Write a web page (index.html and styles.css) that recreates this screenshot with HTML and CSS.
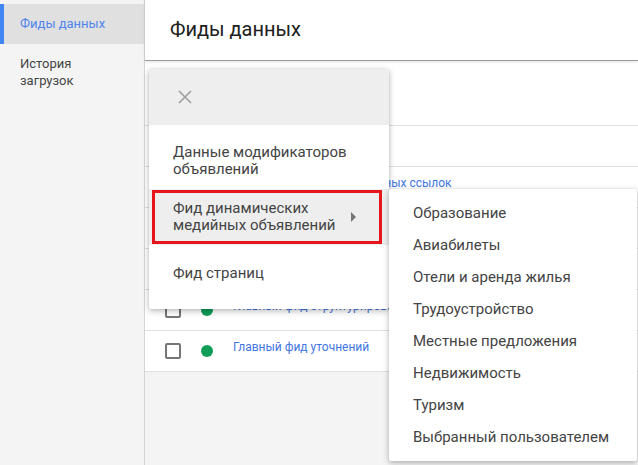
FILE: index.html
```html
<!DOCTYPE html>
<html lang="ru">
<head>
<meta charset="utf-8">
<link rel="stylesheet" href="styles.css">
</head>
<body>
<div class="app">
  <nav class="sidebar">
    <div class="nav-item active">Фиды данных</div>
    <div class="nav-item">История<br>загрузок</div>
  </nav>
  <main class="main">
    <header class="header"><h1>Фиды данных</h1></header>
    <section class="table">
      <div class="toolbar"></div>
      <div class="thead"></div>
      <div class="row"><span class="cb"></span><span class="dot"></span><a class="link">Главный фид дополнительных ссылок</a></div>
      <div class="row"><span class="cb"></span><span class="dot"></span></div>
      <div class="row"><span class="cb"></span><span class="dot"></span></div>
      <div class="row"><span class="cb"></span><span class="dot"></span><a class="link clip">Главный фид структурированных описаний</a></div>
      <div class="row"><span class="cb"></span><span class="dot"></span><a class="link">Главный фид уточнений</a></div>
    </section>
  </main>
</div>

<div class="menu">
  <div class="menu-head">
    <svg class="close" width="14" height="14" viewBox="0 0 14 14"><path d="M1 1L13 13M13 1L1 13" stroke="#9e9e9e" stroke-width="1.6" fill="none"/></svg>
  </div>
  <ul class="menu-list">
    <li class="menu-item">Данные модификаторов<br>объявлений</li>
    <li class="menu-item hover">Фид динамических<br>медийных объявлений<span class="arrow"></span></li>
    <li class="menu-item">Фид страниц</li>
  </ul>
</div>

<ul class="submenu">
  <li>Образование</li>
  <li>Авиабилеты</li>
  <li>Отели и аренда жилья</li>
  <li>Трудоустройство</li>
  <li>Местные предложения</li>
  <li>Недвижимость</li>
  <li>Туризм</li>
  <li>Выбранный пользователем</li>
</ul>
</body>
</html>
```

FILE: styles.css
```css
* { box-sizing: border-box; }
html, body { margin: 0; padding: 0; }
body {
  font-family: Roboto, "Liberation Sans", Arial, sans-serif;
  background: #f4f4f4;
  width: 638px;
  height: 465px;
  overflow: hidden;
  position: relative;
}
.app { display: flex; height: 465px; }

.sidebar {
  width: 145px;
  flex: none;
  background: #f4f4f4;
  border-right: 1px solid #d4d4d4;
  padding-top: 4px;
}
.nav-item {
  font-size: 13px;
  line-height: 17px;
  color: #444;
  padding: 11px 10px 11px 20px;
}
.nav-item.active {
  background: #e0e0e0;
  color: #4f86ec;
  border-left: 4px solid #4285f4;
  padding-left: 16px;
  height: 40px;
}

.main { flex: 1; display: flex; flex-direction: column; }
.header {
  height: 61px;
  background: #fff;
  border-bottom: 1px solid #9a9a9a;
  box-shadow: 0 1px 3px rgba(0,0,0,.12);
  display: flex;
  align-items: center;
  padding-left: 25px;
  position: relative;
  z-index: 1;
}
.header h1 {
  margin: 0 0 3px;
  font-size: 20px;
  font-weight: 400;
  color: #202020;
}

.table { background: #fff; }
.toolbar { height: 65px; border-bottom: 1px solid #e0e0e0; }
.thead { height: 41px; border-bottom: 1px solid #e0e0e0; }
.row {
  height: 41px;
  border-bottom: 1px solid #e0e0e0;
  display: flex;
  align-items: center;
  padding-left: 20px;
}
.cb {
  width: 16px; height: 16px;
  border: 2px solid #767676;
  border-radius: 2px;
  margin-right: 20px;
}
.dot {
  width: 12px; height: 12px;
  border-radius: 50%;
  background: #0f9d58;
  margin-right: 20px;
}
.link {
  font-size: 12px;
  color: #3f76df;
  margin-bottom: 8px;
  white-space: nowrap;
}
.link.clip {
  max-width: 156px;
  overflow: hidden;
}

.menu {
  position: absolute;
  left: 149px;
  top: 69px;
  width: 240px;
  background: #fff;
  border-radius: 2px;
  box-shadow: 0 2px 6px rgba(0,0,0,.28), 0 0 2px rgba(0,0,0,.1);
  z-index: 5;
}
.menu-head {
  height: 56px;
  background: #eeeeee;
  display: flex;
  align-items: center;
  padding-left: 29px;
  border-radius: 2px 2px 0 0;
}
.menu-list { list-style: none; margin: 0; padding: 8px 0; }
.menu-item {
  height: 56px;
  font-size: 15px;
  line-height: 17px;
  color: #444;
  padding-left: 24px;
  display: flex;
  flex-direction: column;
  justify-content: center;
  position: relative;
}
.menu-item.hover { background: #eeeeee; }
.menu-item.hover::after {
  content: "";
  position: absolute;
  left: 3px; right: 7px; top: 1px; bottom: 1px;
  border: 3px solid #e8141c;
}
.arrow {
  position: absolute;
  right: 33px;
  top: 23px;
  width: 0; height: 0;
  border-left: 5px solid #757575;
  border-top: 5px solid transparent;
  border-bottom: 5px solid transparent;
}

.submenu {
  position: absolute;
  left: 389px;
  top: 189px;
  width: 248px;
  margin: 0;
  padding: 8px 0;
  list-style: none;
  background: #fff;
  border-radius: 2px;
  box-shadow: 0 2px 6px rgba(0,0,0,.28), 0 0 2px rgba(0,0,0,.1);
  z-index: 6;
}
.submenu li {
  height: 32px;
  line-height: 32px;
  font-size: 15px;
  color: #444;
  padding-left: 24px;
  white-space: nowrap;
}
```
